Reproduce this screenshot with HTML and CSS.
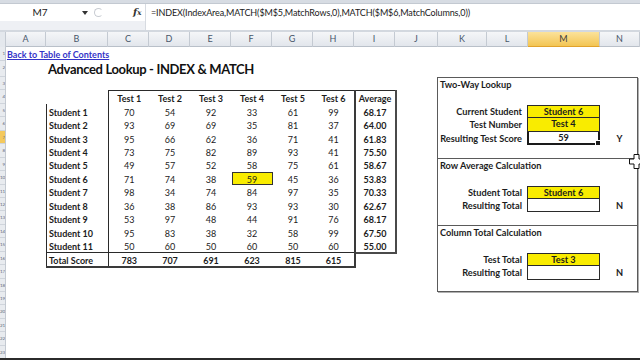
FILE: index.html
```html
<!DOCTYPE html>
<html>
<head>
<meta charset="utf-8">
<link rel="stylesheet" href="styles.css">
</head>
<body>
<div class="app">
  <div class="topstrip"></div>
  <div class="fbar">
    <div class="fleft">
      <div class="namebox">M7</div>
      <svg class="nbarrow" width="6" height="4" viewBox="0 0 6 4"><path d="M0 0H6L3 4Z" fill="#333"/></svg>
      <div class="grip"></div>
      <div class="fx">f<span class="fxx">x</span></div>
    </div>
    <div class="formula">=INDEX(IndexArea,MATCH($M$5,MatchRows,0),MATCH($M$6,MatchColumns,0))</div>
  </div>
  <div class="band"></div>
  <div class="colheads">
    <div class="ch corner"></div>
    <div class="ch">A</div><div class="ch">B</div><div class="ch">C</div><div class="ch">D</div>
    <div class="ch">E</div><div class="ch">F</div><div class="ch">G</div><div class="ch">H</div>
    <div class="ch">I</div><div class="ch">J</div><div class="ch">K</div><div class="ch">L</div>
    <div class="ch sel">M</div><div class="ch">N</div>
  </div>
  <div class="sheet">
    <div class="rowheads">
      <div class="rh r1">1</div><div class="rh r2">2</div><div class="rh">3</div><div class="rh">4</div>
      <div class="rh">5</div><div class="rh">6</div><div class="rh sel">7</div><div class="rh">8</div>
      <div class="rh">9</div><div class="rh">10</div><div class="rh">11</div><div class="rh">12</div>
      <div class="rh">13</div><div class="rh">14</div><div class="rh">15</div><div class="rh">16</div>
      <div class="rh">17</div><div class="rh">18</div><div class="rh">19</div><div class="rh">20</div>
      <div class="rh">21</div><div class="rh">22</div><div class="rh">23</div>
    </div>
    <a class="link" href="#">Back to Table of Contents</a>
    <div class="title">Advanced Lookup - INDEX &amp; MATCH</div>

    <table class="data">
      <colgroup><col class="cb"><col class="cn"><col class="cn"><col class="cn"><col class="cn"><col class="cn"><col class="cn"><col class="cn"></colgroup>
      <tr class="hdr">
        <th class="corner"></th><th class="first">Test 1</th><th>Test 2</th><th>Test 3</th><th>Test 4</th><th>Test 5</th><th class="last">Test 6</th><th class="avg">Average</th>
      </tr>
      <tr><th class="name">Student 1</th><td class="first">70</td><td>54</td><td>92</td><td>33</td><td>61</td><td class="last">99</td><td class="avg">68.17</td></tr>
      <tr><th class="name">Student 2</th><td class="first">93</td><td>69</td><td>69</td><td>35</td><td>81</td><td class="last">37</td><td class="avg">64.00</td></tr>
      <tr><th class="name">Student 3</th><td class="first">95</td><td>66</td><td>62</td><td>36</td><td>71</td><td class="last">41</td><td class="avg">61.83</td></tr>
      <tr><th class="name">Student 4</th><td class="first">73</td><td>75</td><td>82</td><td>89</td><td>93</td><td class="last">41</td><td class="avg">75.50</td></tr>
      <tr><th class="name">Student 5</th><td class="first">49</td><td>57</td><td>52</td><td>58</td><td>75</td><td class="last">61</td><td class="avg">58.67</td></tr>
      <tr><th class="name">Student 6</th><td class="first">71</td><td>74</td><td>38</td><td class="hit">59</td><td>45</td><td class="last">36</td><td class="avg">53.83</td></tr>
      <tr><th class="name">Student 7</th><td class="first">98</td><td>34</td><td>74</td><td>84</td><td>97</td><td class="last">35</td><td class="avg">70.33</td></tr>
      <tr><th class="name">Student 8</th><td class="first">36</td><td>38</td><td>86</td><td>93</td><td>93</td><td class="last">30</td><td class="avg">62.67</td></tr>
      <tr><th class="name">Student 9</th><td class="first">53</td><td>97</td><td>48</td><td>44</td><td>91</td><td class="last">76</td><td class="avg">68.17</td></tr>
      <tr><th class="name">Student 10</th><td class="first">95</td><td>83</td><td>38</td><td>32</td><td>58</td><td class="last">99</td><td class="avg">67.50</td></tr>
      <tr><th class="name">Student 11</th><td class="first">50</td><td>60</td><td>50</td><td>60</td><td>50</td><td class="last">60</td><td class="avg lastavg">55.00</td></tr>
      <tr class="total"><th class="name">Total Score</th><td class="first">783</td><td>707</td><td>691</td><td>623</td><td>815</td><td class="last">615</td><td class="noavg"></td></tr>
    </table>

    <div class="panel">
      <div class="sec s6">
        <div class="stitle">Two-Way Lookup</div>
        <div class="blank"></div>
        <div class="lbl">Current Student</div><div class="box yel">Student 6</div><div class="flag"></div>
        <div class="lbl">Test Number</div><div class="box yel">Test 4</div><div class="flag"></div>
        <div class="lbl">Resulting Test Score</div><div class="box active">59</div><div class="flag">Y</div>
      </div>
      <div class="sec s5">
        <div class="stitle">Row Average Calculation</div>
        <div class="blank"></div>
        <div class="lbl">Student Total</div><div class="box yel">Student 6</div><div class="flag"></div>
        <div class="lbl">Resulting Total</div><div class="box"></div><div class="flag">N</div>
      </div>
      <div class="sec s5 lastsec">
        <div class="stitle">Column Total Calculation</div>
        <div class="blank"></div>
        <div class="lbl">Test Total</div><div class="box yel">Test 3</div><div class="flag"></div>
        <div class="lbl">Resulting Total</div><div class="box"></div><div class="flag">N</div>
      </div>
    </div>

    <svg class="cursor" width="15" height="15" viewBox="0 0 15 15"><path d="M5 0.5H10V5H14.5V10H10V14.5H5V10H0.5V5H5Z" fill="#fff" stroke="#111" stroke-width="1"/></svg>
  </div>
  <div class="bottomline"></div>
</div>
</body>
</html>
```

FILE: styles.css
```css
* { box-sizing: border-box; }
html, body { margin: 0; padding: 0; }
body {
  width: 640px; height: 360px; overflow: hidden;
  background: #fff;
  font-family: "Lato", "Open Sans", sans-serif;
  color: #1c1c1c;
}
.app { display: flex; flex-direction: column; height: 360px; }
.topstrip { height: 4px; background: #d7dce3; border-bottom: 1px solid #c3c9d1; }
.fbar { display: flex; height: 26px; background: #fff; }
.fleft {
  width: 145px; display: flex; align-items: flex-start; position: relative;
  background: linear-gradient(#fff 0, #fff 17px, #eef0f4 17px, #eef0f4 100%);
}
.namebox {
  width: 80px; height: 17px; line-height: 17px; text-align: center;
  font-size: 10px; color: #222; padding-left: 0;
}
.nbarrow { margin-top: 7px; margin-left: 2px; }
.grip {
  width: 9px; height: 9px; margin: 4px 0 0 6px;
  border: 1px solid #c8ccd2; border-right-color: transparent; border-radius: 50%;
}
.fx {
  margin: 2px 0 0 30px; font-family: "DejaVu Serif", serif; font-style: italic;
  font-size: 10px; color: #333; font-weight: bold;
}
.fxx { font-size: 7px; }
.formula {
  flex: 1; border-left: 1px solid #d7dbe1; padding: 3px 0 0 5px;
  font-size: 9px; letter-spacing: -0.12px; color: #1a1a1a; white-space: nowrap;
}
.band { height: 2px; background: #d3d8df; }
.colheads {
  display: grid; height: 15px;
  grid-template-columns: 6px 40px 62px repeat(7, 41px) 43px 49px 41px 72px 1fr;
  background: linear-gradient(#f5f6f8, #e2e6ec);
  border-bottom: 1px solid #b9c0c9;
}
.ch {
  font-size: 9px; color: #48566a; text-align: center; line-height: 14px;
  border-right: 1px solid #c4cad2;
}
.ch.corner { background: #e4e8ed; }
.ch.sel { background: linear-gradient(#fbe29a, #f3c553); border-bottom: 1px solid #e1a22b; color: #3d3d3d; }

.sheet {
  flex: 1; display: grid; position: relative; overflow: hidden;
  grid-template-columns: 6px 40px 62px repeat(7, 41px) 43px 49px 41px 72px 1fr;
  grid-template-rows: 14px 16px repeat(16, 13.45px) 1fr;
}
.rowheads {
  grid-column: 1; grid-row: 1 / -1; background: #e8ebef;
  border-right: 1px solid #c3c9d1; overflow: hidden;
  display: flex; flex-direction: column;
}
.rh {
  height: 13.45px; flex: none; font-size: 4.5px; color: #5c6778; text-align: right;
  line-height: 13px; border-bottom: 1px solid #cfd4db; white-space: nowrap; padding-right: 0;
}
.rh.r1 { height: 14px; }
.rh.r2 { height: 16px; }
.rh.sel { background: #f4c95d; }

.link {
  grid-column: 2 / 5; grid-row: 1; align-self: center;
  font-size: 9px; font-weight: bold; color: #3434c8; text-decoration: underline;
  padding-left: 1px; white-space: nowrap;
}
.title {
  grid-column: 3 / 10; grid-row: 2 / 4; padding: 0 0 0 2px;
  font-size: 13px; letter-spacing: -0.35px; font-weight: bold; color: #111; white-space: nowrap;
}

.data {
  grid-column: 3 / 11; grid-row: 4 / 17;
  border-collapse: collapse; table-layout: fixed; width: 349px;
  font-size: 9px;
}
.data .cb { width: 62px; }
.data .cn { width: 41px; }
.data tr { height: 13.45px; }
.data th, .data td { padding: 3px 0 0 0; text-align: center; white-space: nowrap; line-height: 10px; }
.data th { font-weight: bold; }
.data td { font-weight: normal; }
.data th.name { text-align: left; padding-left: 2px; border-left: 1px solid #2a2a2a; }
.data th.corner { border: none; }
.data .first { border-left: 1px solid #2a2a2a; }
.data .last { border-right: 2px solid #3a3a3a; }
.data .hdr th { border-top: 1px solid #2a2a2a; }
.data .hdr th.corner { border-top: none; }
.data .avg { font-weight: bold; border-left: 2px solid #3a3a3a; border-right: 2px solid #4a4a4a; }
.data .hdr th.avg { border-top: 1px solid #2a2a2a; }
.data td.lastavg { border-bottom: 2px solid #4a4a4a; }
.data td.hit { background: #f9ec00; outline: 1px solid #333; outline-offset: -1px; }
.data .total th, .data .total td { font-weight: bold; border-top: 1px solid #2a2a2a; border-bottom: 2px solid #3a3a3a; }
.data .total td.noavg { border-bottom: none; border-right: none; }

.panel {
  grid-column: 12 / 16; grid-row: 3 / 19; margin-left: -1px; margin-right: 2px;
  border: 1px solid #5a5a5a; box-shadow: 1px 1px 0 #b0b0b0;
  display: flex; flex-direction: column;
}
.sec {
  display: grid; grid-template-columns: 90px 72px 1fr;
  border-bottom: 1px solid #5a5a5a;
  font-size: 9.2px; font-weight: bold;
}
.s6 { grid-template-rows: 13.45px 13.45px 13.45px 13.45px 13.45px 1fr; height: 80.7px; }
.s5 { grid-template-rows: 13.45px 13.45px 13.45px 13.45px 1fr; height: 67.25px; }
.lastsec { border-bottom: none; flex: 1; }
.stitle { grid-column: 1 / -1; padding-left: 2px; line-height: 14px; }
.blank { grid-column: 1 / -1; }
.lbl { text-align: right; padding-right: 6px; line-height: 13px; white-space: nowrap; }
.box { text-align: center; border: 1px solid #2a2a2a; line-height: 12px; margin-left: -1px; }
.sec .box + .flag + .lbl + .box { border-top: none; }
.yel { background: #f9ec00; }
.box.active { border: 2px solid #1a1a1a; border-top: none; line-height: 11px; position: relative; }
.box.active::after {
  content: ""; position: absolute; right: -3px; bottom: -3px; width: 4px; height: 4px;
  background: #1a1a1a; border: 1px solid #fff;
}
.flag { text-align: center; line-height: 13px; padding-left: 2px; }

.cursor { position: absolute; left: 629px; top: 107px; }
.bottomline { height: 2px; background: #2b2b2b; }
```
